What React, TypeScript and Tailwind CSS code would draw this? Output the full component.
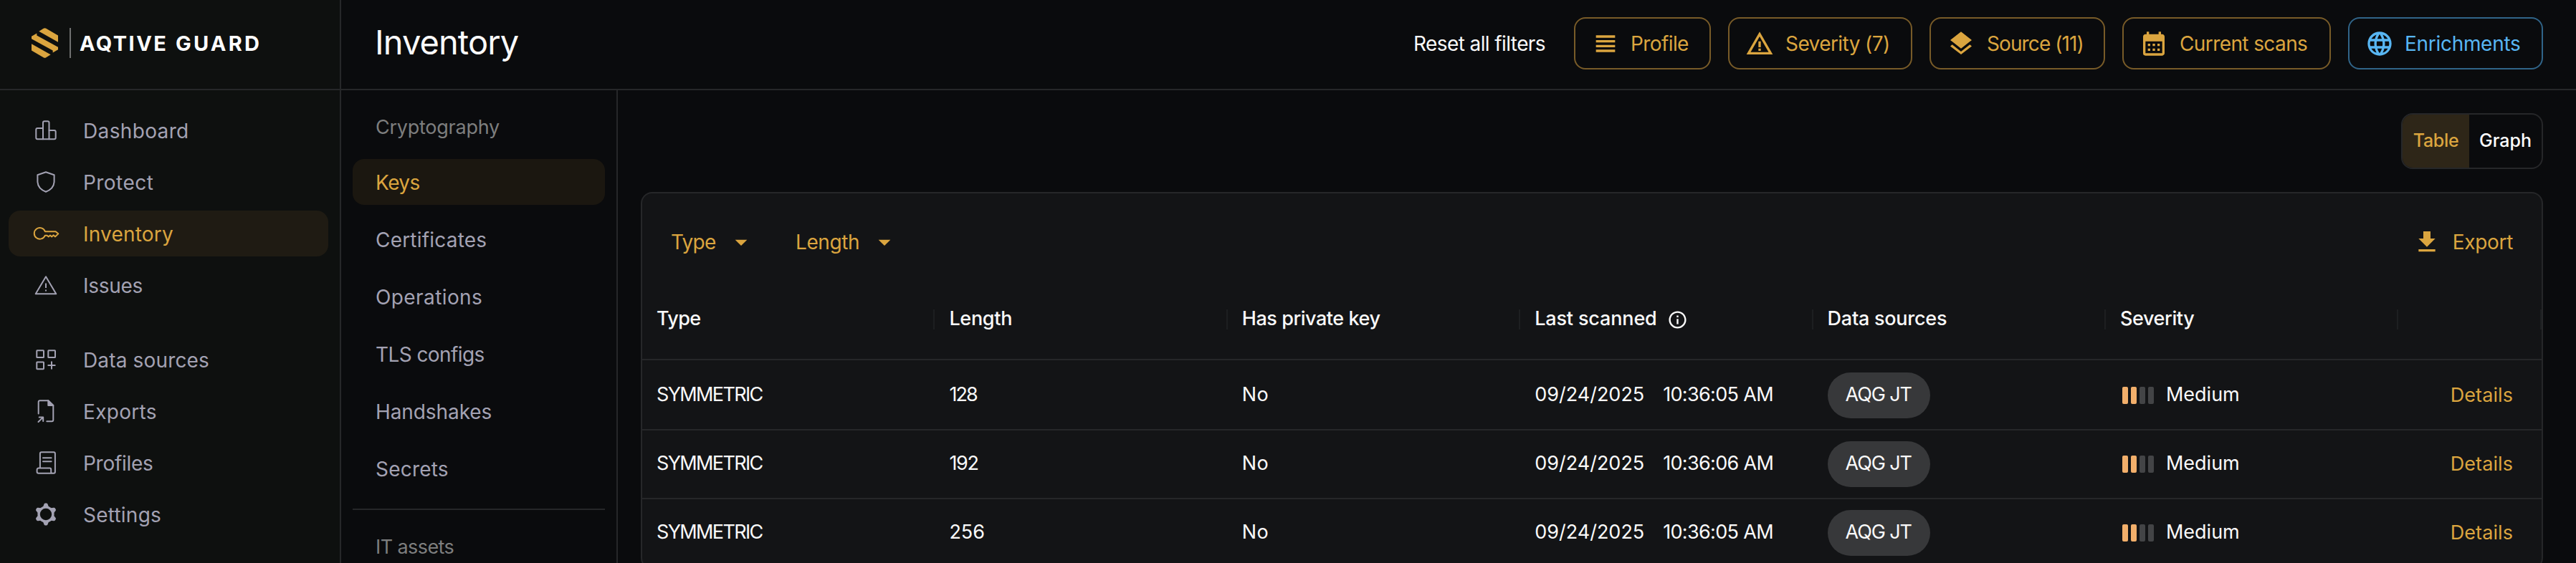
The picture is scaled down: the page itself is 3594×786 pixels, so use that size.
import React from "react";
import {
  MdArrowDropDown,
  MdCalendarMonth,
  MdFileDownload,
  MdInfoOutline,
  MdLanguage,
  MdLayers,
  MdViewHeadline,
  MdWarningAmber,
} from "react-icons/md";

type Item = { label: string; icon?: React.ReactNode; tracking: string; active?: boolean };

function Icon({ children, strokeWidth = 2 }: { children: React.ReactNode; strokeWidth?: number }) {
  return (
    <svg
      width="40"
      height="36"
      viewBox="-2 0 40 36"
      fill="none"
      stroke="currentColor"
      strokeWidth={strokeWidth}
      strokeLinecap="round"
      strokeLinejoin="round"
    >
      {children}
    </svg>
  );
}

const DashboardIcon = (
  <Icon>
    <path d="M14 30.3V7.3a2 2 0 0 1 2-2h4.5a2 2 0 0 1 2 2v23" />
    <path d="M14 15H6.3a2 2 0 0 0-2 2v11.3a2 2 0 0 0 2 2h23.4a2 2 0 0 0 2-2V20a2 2 0 0 0-2-2h-7.2" />
  </Icon>
);

const ShieldIcon = (
  <Icon>
    <path d="M18 4.2 29.6 8.2V17c0 7-4.5 12-11.6 14.8C10.9 29 6.4 24 6.4 17V8.2Z" />
  </Icon>
);

const KeyIcon = (
  <Icon>
    <path d="M16.9 15.2H31.6l3.7 3-4.2 4.2-2.5-2.1-2.4 2.1-2.2-1.9-2.3 1.9-2.1-1.6h-2.8A7.8 7.8 0 1 1 16.9 15.2Z" />
  </Icon>
);

const IssuesIcon = (
  <Icon>
    <path d="M18 6.2 32.3 30.3H3.7Z" />
    <path d="M18 15.5V22" strokeLinecap="butt" />
    <path d="M18 24.4V26.4" strokeLinecap="butt" />
  </Icon>
);

const SourcesIcon = (
  <Icon>
    <rect x="5.3" y="5.3" width="9.7" height="9.7" rx="0.6" />
    <rect x="21.3" y="5.3" width="9.7" height="9.7" rx="0.6" />
    <rect x="5.3" y="21.5" width="9.7" height="9.7" rx="0.6" />
    <path d="M26 21.3v9.4M21.3 26h9.4" />
  </Icon>
);

const ExportsIcon = (
  <Icon>
    <path d="M7.7 21.5V5.3a2 2 0 0 1 2-2H21.3L28.3 10v20.3a2 2 0 0 1-2 2h-7" />
    <path d="M21.3 3.3V10h7Z" fill="currentColor" />
    <path d="M7.5 33 14 26.6M8.7 26.5h5.5v5.4" />
  </Icon>
);

const ProfilesIcon = (
  <Icon>
    <path d="M9.9 25.6V5.3a2 2 0 0 1 2-2h17a2 2 0 0 1 2 2v25.4a2 2 0 0 1-2 2h-21a2.3 2.3 0 0 1-2.3-2.3v-2.6a2.2 2.2 0 0 1 2.2-2.2h15.6a1.8 1.8 0 0 1 1.8 1.8v3.3a1.9 1.9 0 0 0 1.9 2" />
    <path d="M14 11.3h11.6M14 16.3h11.6" />
  </Icon>
);

const SettingsIcon = (
  <Icon>
    <circle cx="18" cy="18" r="9.9" strokeWidth="3.4" />
    <g fill="currentColor" stroke="none">
      {[0, 60, 120, 180, 240, 300].map((a) => (
        <path key={a} d="M13.6 8.8 15.4 4a2 2 0 0 1 1.6-1.4h2a2 2 0 0 1 1.6 1.4l1.8 4.8Z" transform={`rotate(${a} 18 18)`} />
      ))}
    </g>
  </Icon>
);

const primary: Item[] = [
  { label: "Dashboard", icon: DashboardIcon, tracking: "tracking-[0.35px]" },
  { label: "Protect", icon: ShieldIcon, tracking: "tracking-[0.45px]" },
  { label: "Inventory", icon: KeyIcon, tracking: "tracking-[0.2px]", active: true },
  { label: "Issues", icon: IssuesIcon, tracking: "tracking-[-0.29px]" },
];

const secondary: Item[] = [
  { label: "Data sources", icon: SourcesIcon, tracking: "tracking-[0.15px]" },
  { label: "Exports", icon: ExportsIcon, tracking: "tracking-[0.3px]" },
  { label: "Profiles", icon: ProfilesIcon, tracking: "tracking-[-0.29px]" },
  { label: "Settings", icon: SettingsIcon, tracking: "tracking-[0.23px]" },
];

const cryptography: Item[] = [
  { label: "Keys", tracking: "tracking-[-0.57px]", active: true },
  { label: "Certificates", tracking: "tracking-[0.2px]" },
  { label: "Operations", tracking: "tracking-[0.4px]" },
  { label: "TLS configs", tracking: "tracking-[-0.59px]" },
  { label: "Handshakes", tracking: "tracking-[-0.09px]" },
  { label: "Secrets", tracking: "tracking-[0.2px]" },
];

function NavGroup({ items }: { items: Item[] }) {
  return (
    <nav className="flex flex-col gap-2">
      {items.map((item) => (
        <a
          key={item.label}
          className={`flex h-16 items-center rounded-2xl pl-8 text-[28px] leading-none ${
            item.active ? "bg-[#1f1b13] text-[#dba53f]" : "text-[#a3a2b3]"
          }`}
        >
          {item.icon}
          <span className={`ml-8 pt-0.5 ${item.tracking}`}>{item.label}</span>
        </a>
      ))}
    </nav>
  );
}

function Sidebar() {
  return (
    <aside className="flex w-[476px] shrink-0 flex-col border-r-2 border-[#262729] bg-[#0e100f]">
      <div className="flex h-[126px] shrink-0 items-center border-b-2 border-[#262729] pb-1 pl-11">
        <svg width="37" height="42" viewBox="132 117 111 126" fill="#dba53f">
          <path d="M182 119.5q5.5-3 11 0L243 148.500V176L163 131Z" />
          <path d="M132 152.500 154 139.500V148.500L243 197.500V207.500L221 220.500V211.500L132 162.500Z" />
          <path d="M193 240.5q-5.5 3-11 0L132 211.500V184L212 229Z" />
        </svg>
        <div className="ml-4 h-[42px] w-0.5 bg-[#6f7070]" />
        <div className="ml-3 flex text-[29px] leading-none font-bold text-white">
          <span className="w-[134px] tracking-[2.4px]">AQTIVE</span>
          <span className="tracking-[3.2px]">GUARD</span>
        </div>
      </div>
      <div className="flex flex-col gap-10 pt-6 pr-4 pl-3">
        <NavGroup items={primary} />
        <NavGroup items={secondary} />
      </div>
    </aside>
  );
}

function SubNav() {
  return (
    <aside className="flex w-[386px] shrink-0 flex-col border-r-2 border-[#262729] px-4">
      <div className="flex h-24 shrink-0 items-center pt-[7px] pl-8 text-[27px] leading-none tracking-[-0.25px] text-[#7d7e7e]">
        Cryptography
      </div>
      <nav className="flex flex-col gap-4">
        {cryptography.map((item) => (
          <a
            key={item.label}
            className={`flex h-16 items-center rounded-2xl pt-0.5 pl-8 text-[28px] leading-none ${item.tracking} ${
              item.active ? "bg-[#1b1710] text-[#dba53f]" : "text-[#a3a2b3]"
            }`}
          >
            {item.label}
          </a>
        ))}
      </nav>
      <div className="mt-6 h-0.5 shrink-0 bg-[#262729]" />
      <div className="mt-[38px] pl-8 text-[27px] leading-none tracking-[-0.59px] text-[#7d7e7e]">IT assets</div>
    </aside>
  );
}

function FilterButton({ icon, label, className }: { icon: React.ReactNode; label: string; className: string }) {
  return (
    <button className={`flex h-[73px] items-center rounded-2xl border-2 pl-[22px] text-[28px] leading-none whitespace-nowrap ${className}`}>
      {icon}
      {label}
    </button>
  );
}

function Header() {
  const gold = "border-[#785b28] text-[#dba53f]";
  return (
    <header className="flex h-[126px] shrink-0 items-start border-b-2 border-[#262729] pt-6 pr-[46px] pl-[47px]">
      <h1 className="mt-[11px] text-[47px] leading-none tracking-[-0.9px] text-[#fafafa]">Inventory</h1>
      <div className="ml-auto flex items-center gap-6">
        <span className="mr-4 text-[28px] leading-none tracking-[-0.6px] text-[#fafafa]">Reset all filters</span>
        <FilterButton icon={<MdViewHeadline className="mr-[15px] size-10" />} label="Profile" className={`w-[191px] tracking-[-0.6px] ${gold}`} />
        <FilterButton icon={<MdWarningAmber className="mr-4 size-10" />} label="Severity (7)" className={`w-[257px] tracking-[-0.58px] ${gold}`} />
        <FilterButton icon={<MdLayers className="mr-4 size-10" />} label="Source (11)" className={`w-[245px] tracking-[-0.9px] ${gold}`} />
        <FilterButton icon={<MdCalendarMonth className="mr-4 size-10" />} label="Current scans" className={`w-[291px] tracking-[-0.6px] ${gold}`} />
        <FilterButton
          icon={<MdLanguage className="mr-[15px] size-10" />}
          label="Enrichments"
          className="w-[272px] border-[#306488] tracking-[-0.3px] text-[#58b6f3]"
        />
      </div>
    </header>
  );
}

function HeadCell({ children, last }: { children?: React.ReactNode; last?: boolean }) {
  return (
    <div
      className={`flex h-7 items-center border-r-2 border-[#1d1f21] pl-5 text-[27px] leading-none font-medium text-[#fafafa] ${
        last ? "flex-1" : "w-[408.4px] shrink-0"
      }`}
    >
      {children}
    </div>
  );
}

function Cell({ children }: { children: React.ReactNode }) {
  return <div className="flex w-[408.4px] shrink-0 items-center pl-5">{children}</div>;
}

const rows = [
  { length: "128", track: "tracking-[-1.9px]", time: "10:36:05 AM" },
  { length: "192", track: "tracking-[-1.3px]", time: "10:36:06 AM" },
  { length: "256", track: "tracking-normal", time: "10:36:05 AM" },
];

function Table() {
  return (
    <section className="flex h-[540px] flex-col rounded-2xl border-2 border-[#262729] bg-[#131416]">
      <div className="flex h-[136px] shrink-0 items-center pr-10 pl-10 text-[28px] leading-none text-[#dba53f]">
        <div className="flex w-[174px] items-center">
          <span className="w-[78px] tracking-[-0.74px]">Type</span>
          <MdArrowDropDown className="size-10" />
        </div>
        <div className="flex items-center">
          <span className="w-[104px] tracking-[-0.41px]">Length</span>
          <MdArrowDropDown className="size-10" />
        </div>
        <div className="ml-auto flex items-center gap-4">
          <MdFileDownload className="size-10" />
          <span className="tracking-[-0.31px]">Export</span>
        </div>
      </div>
      <div className="flex h-[97px] shrink-0 items-start border-b-2 border-[#262729] pt-[26px]">
        <HeadCell>
          <span className="pb-[3px] tracking-[-0.6px]">Type</span>
        </HeadCell>
        <HeadCell>
          <span className="pb-[3px] tracking-[-0.3px]">Length</span>
        </HeadCell>
        <HeadCell>
          <span className="pb-[3px] tracking-[-0.45px]">Has private key</span>
        </HeadCell>
        <HeadCell>
          <span className="pb-[3px] tracking-[-0.15px]">Last scanned</span>
          <MdInfoOutline className="ml-3.5 size-[29px]" />
        </HeadCell>
        <HeadCell>
          <span className="pb-[3px] tracking-[-0.25px]">Data sources</span>
        </HeadCell>
        <HeadCell>
          <span className="pb-[3px] tracking-[-0.4px]">Severity</span>
        </HeadCell>
        <HeadCell last />
      </div>
      {rows.map((row, i) => (
        <div
          key={row.length}
          className={`flex shrink-0 items-center border-b-2 border-[#262729] text-[27px] leading-none text-[#fafafa] ${
            i === 0 ? "h-[98px] pt-0.5" : "h-24"
          }`}
        >
          <Cell>
            <span className="pb-[3px] tracking-[-1.65px]">SYMMETRIC</span>
          </Cell>
          <Cell>
            <span className={`pb-[3px] ${row.track}`}>{row.length}</span>
          </Cell>
          <Cell>
            <span className="pb-[3px] tracking-[0.5px]">No</span>
          </Cell>
          <Cell>
            <span className="w-[179px] pb-[3px]">09/24/2025</span>
            <span className="pb-[3px] tracking-[-0.67px]">{row.time}</span>
          </Cell>
          <Cell>
            <span className="flex h-16 w-[143px] items-center rounded-full bg-[#37383a] pb-[3px] pl-[25px] tracking-[-1.1px]">AQG JT</span>
          </Cell>
          <Cell>
            <div className="mr-[17px] ml-[3px] flex gap-1">
              <i className="h-6 w-2 rounded-[2px] bg-[#f2af6b]" />
              <i className="h-6 w-2 rounded-[2px] bg-[#f2af6b]" />
              <i className="h-6 w-2 rounded-[2px] bg-[#434446]" />
              <i className="h-6 w-2 rounded-[2px] bg-[#434446]" />
            </div>
            <span className="pb-[3px]">Medium</span>
          </Cell>
          <a className="ml-auto pr-10 pb-px tracking-[0.09px] text-[#dba53f]">Details</a>
        </div>
      ))}
    </section>
  );
}

export default function App() {
  return (
    <div className="flex h-[786px] w-[3594px] overflow-hidden bg-[#0a0b0d] font-['Inter',sans-serif]">
      <Sidebar />
      <div className="flex min-w-0 flex-1 flex-col">
        <Header />
        <div className="flex min-h-0 flex-1">
          <SubNav />
          <main className="flex min-w-0 flex-1 flex-col pt-8 pr-[46px] pl-8">
            <div className="mb-8 flex h-[78px] w-[198px] shrink-0 self-end overflow-hidden rounded-2xl border-2 border-[#262729] text-[25px] leading-none font-medium">
              <button className="w-[93px] bg-[#2e2618] pb-0.5 tracking-[-0.3px] text-[#dba53f]">Table</button>
              <button className="flex-1 pb-0.5 text-white">Graph</button>
            </div>
            <Table />
          </main>
        </div>
      </div>
    </div>
  );
}
